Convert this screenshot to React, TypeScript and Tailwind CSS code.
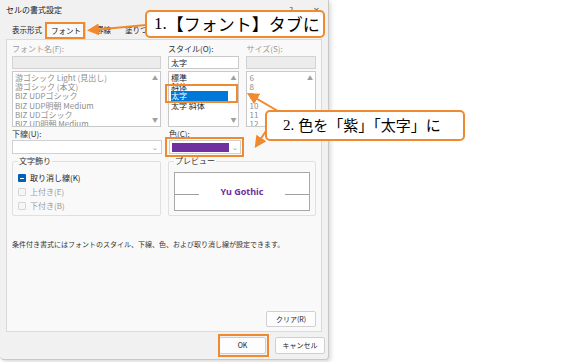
import React from "react";

const jp = { fontFamily: '"Noto Sans CJK JP", "Noto Sans", sans-serif' };

const fontItems = [
  "游ゴシック Light (見出し)",
  "游ゴシック (本文)",
  "BIZ UDPゴシック",
  "BIZ UDP明朝 Medium",
  "BIZ UDゴシック",
  "BIZ UD明朝 Medium",
];

function ScrollArrows() {
  return (
    <div className="flex w-[10px] flex-col items-center justify-between py-[3px] text-[6px] leading-none text-[#a0a0a0]">
      <span>▲</span>
      <span>▼</span>
    </div>
  );
}

function ListBox({
  items,
  selected,
  muted,
}: {
  items: string[];
  selected?: number;
  muted?: boolean;
}) {
  return (
    <div className="flex h-[56px] border border-[#c9c9c9] bg-white">
      <div className="flex-1 overflow-hidden pl-[2px] pt-[1px]">
        {items.map((item, i) => (
          <div
            key={item}
            className={
              "h-[9.2px] text-[8px] leading-[9.2px] whitespace-nowrap " +
              (i === selected
                ? "bg-[#0078d7] text-white"
                : muted
                  ? "text-[#8e8e8e]"
                  : "text-[#222]")
            }
          >
            {item}
          </div>
        ))}
      </div>
      <ScrollArrows />
    </div>
  );
}

function Check({ label, checked }: { label: string; checked?: boolean }) {
  return (
    <div className="flex h-[10px] items-center gap-[4px]">
      {checked ? (
        <div className="flex h-[8px] w-[8px] items-center justify-center rounded-[1px] bg-[#005fb8]">
          <div className="h-[1px] w-[4px] bg-white" />
        </div>
      ) : (
        <div className="h-[8px] w-[8px] rounded-[1px] border border-[#d6d6d6] bg-[#f6f6f6]" />
      )}
      <span className={"text-[8px] leading-[10px] " + (checked ? "text-[#222]" : "text-[#9a9a9a]")}>{label}</span>
    </div>
  );
}

export default function App() {
  return (
    <div className="relative h-[362px] w-[568px] overflow-hidden bg-white" style={jp}>
      {/* dialog */}
      <div className="flex h-[360px] w-[329px] flex-col rounded-b-[4px] border-r border-b border-[#c8c8c8] bg-[#f1f1f1] shadow-[2px_2px_4px_rgba(0,0,0,0.15)]">
        <div className="flex h-[20px] items-center justify-between pl-[6px] pr-[8px]">
          <span className="text-[8px] text-[#222]">セルの書式設定</span>
          <div className="flex gap-[20px] text-[8px] text-[#555]">
            <span>?</span>
            <span>✕</span>
          </div>
        </div>

        <div className="flex h-[19px] items-end pl-[12px] text-[7.5px] leading-[10px] text-[#222]">
          <span className="pb-[4px]">表示形式</span>
          <span className="mb-[-1px] ml-[4px] border-x border-t border-[#d5d5d5] bg-[#f9f9f9] px-[4px] pb-[4px] pt-[3px]">フォント</span>
          <span className="ml-[10px] pb-[4px]">罫線</span>
          <span className="ml-[14px] pb-[4px]">塗りつぶし</span>
        </div>

        <div className="mx-[6px] flex h-[293px] flex-col border border-[#dadada] bg-[#f9f9f9] px-[5px] pt-[4px]">
          <div className="flex gap-x-[7px]">
            <div className="flex w-[150px] flex-col gap-[2px]">
              <span className="h-[10px] text-[8px] leading-[10px] text-[#9a9a9a]">フォント名(F):</span>
              <div className="h-[13px] border border-[#d2d2d2] bg-[#ececec]" />
              <ListBox items={fontItems} muted />
            </div>
            <div className="flex w-[72px] flex-col gap-[2px]">
              <span className="h-[10px] text-[8px] leading-[10px] text-[#333]">スタイル(O):</span>
              <div className="flex h-[13px] items-center border border-[#c9c9c9] bg-white pl-[2px] text-[8px] leading-[10px] text-[#222]">太字</div>
              <ListBox items={["標準", "斜体", "太字", "太字 斜体"]} selected={2} />
            </div>
            <div className="flex w-[70px] flex-col gap-[2px]">
              <span className="h-[10px] text-[8px] leading-[10px] text-[#9a9a9a]">サイズ(S):</span>
              <div className="h-[13px] border border-[#d2d2d2] bg-[#ececec]" />
              <ListBox items={["6", "8", "9", "10", "11", "12"]} muted />
            </div>
          </div>

          <div className="mt-[2px] flex gap-x-[7px]">
            <div className="flex w-[150px] flex-col gap-[1px]">
              <span className="h-[10px] text-[8px] leading-[10px] text-[#333]">下線(U):</span>
              <div className="flex h-[14px] items-center justify-end border border-[#d0d0d0] bg-white pr-[3px] text-[7px] leading-[10px] text-[#999]">⌄</div>
            </div>
            <div className="flex w-[72px] flex-col gap-[1px]">
              <span className="h-[10px] text-[8px] leading-[10px] text-[#333]">色(C):</span>
              <div className="flex h-[14px] items-center gap-[3px] border border-[#d0d0d0] bg-white px-[2px] text-[7px] leading-[10px] text-[#999]">
                <div className="h-[9px] flex-1 bg-[#7030a0]" />
                <span>⌄</span>
              </div>
            </div>
          </div>

          <div className="mt-[7px] flex gap-x-[7px]">
            <div className="relative h-[55px] w-[150px] rounded-[2px] border border-[#e0e0e0]">
              <span className="absolute left-[5px] top-[-6px] bg-[#f9f9f9] px-[1px] text-[8px] leading-[10px] text-[#333]">文字飾り</span>
              <div className="flex flex-col gap-[4px] pl-[5px] pt-[11px]">
                <Check label="取り消し線(K)" checked />
                <Check label="上付き(E)" />
                <Check label="下付き(B)" />
              </div>
            </div>
            <div className="relative h-[55px] w-[149px] rounded-[2px] border border-[#e0e0e0] px-[5px] pt-[10px]">
              <span className="absolute left-[5px] top-[-6px] bg-[#f9f9f9] px-[1px] text-[8px] leading-[10px] text-[#333]">プレビュー</span>
              <div className="flex h-[39px] items-center border border-[#a8a8a8] bg-white">
                <div className="mt-[6px] h-[1px] w-[24px] bg-[#a0a0a0]" />
                <span
                  className="flex-1 text-center text-[9px] font-bold text-[#7030a0]"
                  style={{ fontFamily: '"Noto Sans", "Liberation Sans", sans-serif' }}
                >
                  Yu Gothic
                </span>
                <div className="mt-[6px] h-[1px] w-[24px] bg-[#a0a0a0]" />
              </div>
            </div>
          </div>

          <p className="mt-[23px] text-[7px] leading-[10px] text-[#333]">
            条件付き書式にはフォントのスタイル、下線、色、および取り消し線が設定できます。
          </p>

          <div className="mt-auto mb-[4px] flex justify-end">
            <div className="flex h-[16px] w-[50px] items-center justify-center rounded-[2px] border border-[#d0d0d0] bg-[#fdfdfd] text-[7px] text-[#222]">
              クリア(R)
            </div>
          </div>
        </div>

        <div className="flex flex-1 items-center justify-end gap-[9px] pr-[3px]">
          <div className="flex h-[17px] w-[47px] items-center justify-center rounded-[2px] border border-[#d0d0d0] bg-[#fdfdfd] text-[7px] text-[#222]">OK</div>
          <div className="flex h-[17px] w-[50px] items-center justify-center rounded-[2px] border border-[#d0d0d0] bg-[#fdfdfd] text-[7px] text-[#222]">キャンセル</div>
        </div>
      </div>

      {/* highlight boxes */}
      <div className="absolute left-[45px] top-[22px] h-[17px] w-[40px] border-2 border-[#f08a30]" />
      <div className="absolute left-[165px] top-[84px] h-[19px] w-[73px] border-2 border-[#f08a30]" />
      <div className="absolute left-[165px] top-[137px] h-[20px] w-[79px] border-2 border-[#f08a30]" />
      <div className="absolute left-[218px] top-[334px] h-[23px] w-[51px] border-2 border-[#f08a30]" />

      {/* arrows */}
      <svg className="absolute left-0 top-0" width="568" height="362">
        <defs>
          <marker id="ah" markerWidth="6" markerHeight="6" refX="3" refY="3" orient="auto">
            <path d="M0,0 L6,3 L0,6 Z" fill="#f08a30" />
          </marker>
        </defs>
        <line x1="146" y1="25" x2="93" y2="30" stroke="#f08a30" strokeWidth="2" markerEnd="url(#ah)" />
        <line x1="283" y1="114" x2="252" y2="96" stroke="#f08a30" strokeWidth="2" markerEnd="url(#ah)" />
        <line x1="268" y1="128" x2="258" y2="143" stroke="#f08a30" strokeWidth="2" markerEnd="url(#ah)" />
      </svg>

      {/* callouts */}
      <div className="absolute left-[145px] top-[10px] flex h-[28px] w-[180px] items-center rounded-[5px] border-2 border-[#f08a30] bg-white pl-[7px] text-[17px] text-black">
        <span style={{ fontFamily: '"Liberation Serif", serif' }}>1.</span>
        <span>【フォント】タブに</span>
      </div>
      <div className="absolute left-[265px] top-[110px] flex h-[31px] w-[200px] items-center rounded-[5px] border-2 border-[#f08a30] bg-white pl-[16px] text-[15px] text-black">
        <span style={{ fontFamily: '"Liberation Serif", serif' }}>2.</span>
        <span className="ml-[4px]">色を「紫」「太字」に</span>
      </div>
    </div>
  );
}
